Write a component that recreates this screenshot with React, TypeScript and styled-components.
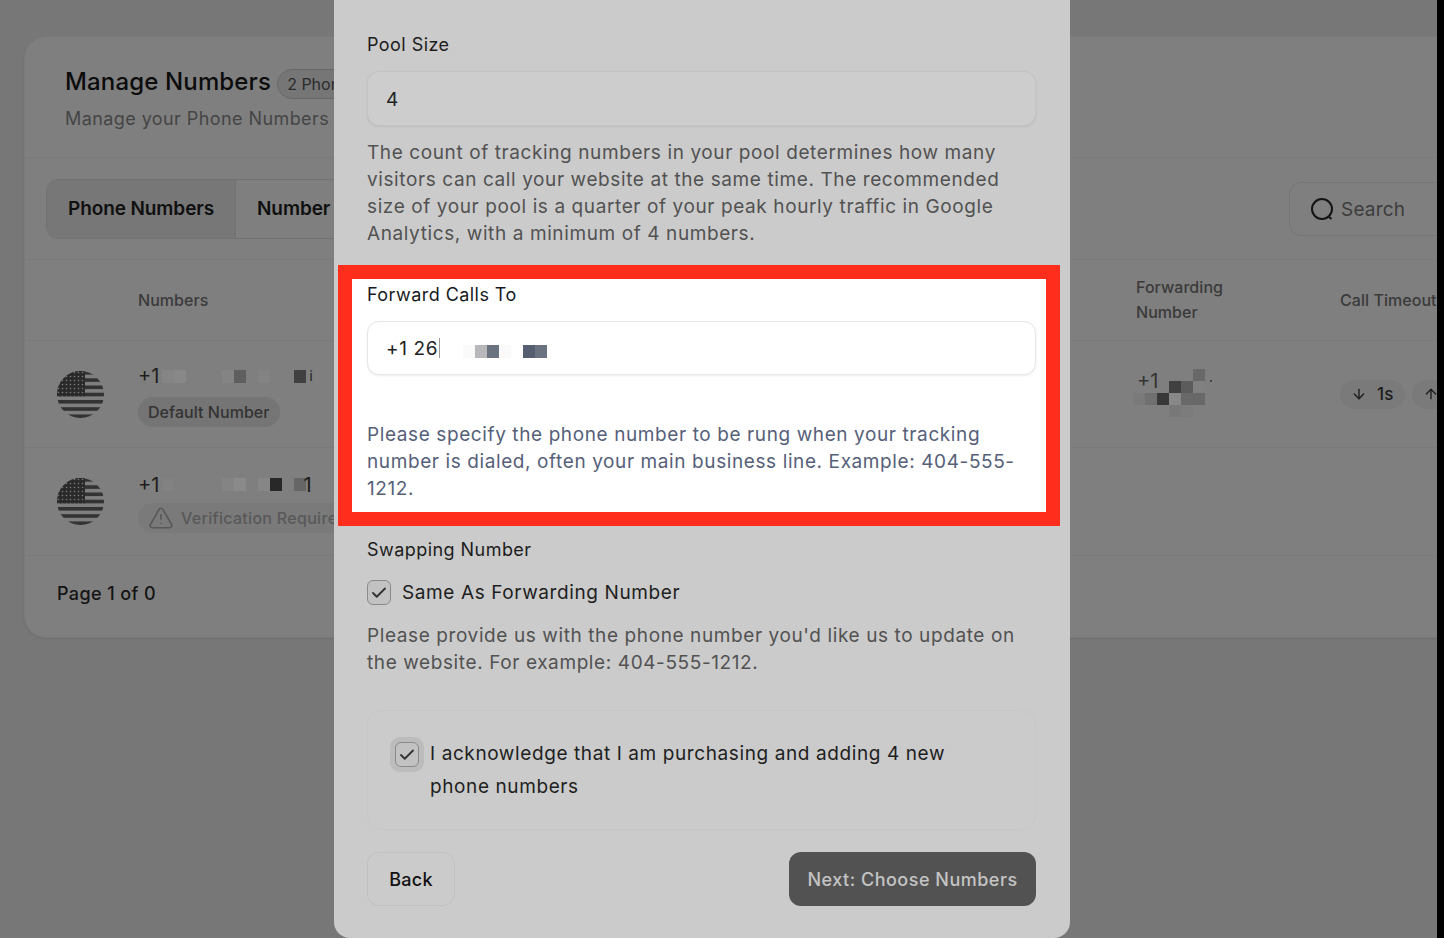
import React from "react";
import styled, { createGlobalStyle } from "styled-components";
import { ArrowDown, ArrowUp, Check, TriangleAlert } from "lucide-react";

const GlobalStyle = createGlobalStyle`
  html, body {
    margin: 0;
    padding: 0;
    background: #777777;
    font-family: Inter, "Liberation Sans", sans-serif;
  }
  * { box-sizing: border-box; }
`;

const Screen = styled.div`
  position: relative;
  display: flex;
  width: 1444px;
  height: 938px;
  overflow: hidden;
  background: #777777;
`;

const Page = styled.div`
  flex: 0 0 1437px;
  padding: 36px 0 0 24px;
  overflow: hidden;
`;

const RightEdge = styled.div`
  flex: 1;
  background: #000000;
`;

const Card = styled.section`
  width: 1560px;
  height: 602px;
  background: #7f7f7f;
  border: 1px solid #7a7a7a;
  border-radius: 22px;
  box-shadow: 0 1px 2px rgba(0, 0, 0, 0.08);
`;

const CardHeader = styled.header`
  height: 121px;
  padding: 30px 0 0 40px;
  border-bottom: 1px solid #7a7a7a;
`;

const TitleRow = styled.div`
  display: flex;
  align-items: center;
  gap: 6px;
  height: 30px;
`;

const Title = styled.h1`
  margin: 0;
  font-size: 24px;
  font-weight: 500;
  line-height: 30px;
  letter-spacing: 0.15px;
  color: #0c0c0c;
`;

const CountBadge = styled.span`
  padding: 0 9px;
  height: 30px;
  margin-top: 3px;
  border: 1px solid #6a6a6a;
  border-radius: 15px;
  background: #767676;
  font-size: 16px;
  line-height: 28px;
  color: #2c2c2c;
  white-space: nowrap;
`;

const Subtitle = styled.p`
  margin: 8px 0 0;
  font-size: 18px;
  line-height: 27px;
  letter-spacing: 0.42px;
  color: #454545;
`;

const TabBar = styled.div`
  display: flex;
  align-items: center;
  justify-content: space-between;
  height: 102px;
  padding: 0 21px;
  border-bottom: 1px solid #7a7a7a;
`;

const Tabs = styled.div`
  display: flex;
  height: 60px;
  border: 1px solid #727272;
  border-radius: 12px;
  overflow: hidden;
`;

const Tab = styled.div<{ $active?: boolean }>`
  display: flex;
  align-items: center;
  padding: 0 21px;
  background: ${(p) => (p.$active ? "#777777" : "transparent")};
  border-right: 1px solid #727272;
  font-size: 19px;
  font-weight: 600;
  letter-spacing: -0.1px;
  color: #101010;
  white-space: nowrap;
`;

const SearchBox = styled.div`
  display: flex;
  align-items: center;
  gap: 7px;
  width: 273px;
  height: 54px;
  padding-left: 20px;
  border: 1px solid #757575;
  border-radius: 12px;
  font-size: 19px;
  line-height: 26px;
  letter-spacing: 0.2px;
  color: #3c3c3c;
`;

const SearchText = styled.span`
  padding-top: 2px;
`;

const TableGrid = styled.div<{ $height: number }>`
  display: grid;
  grid-template-columns: 113px 998px 204px 1fr;
  align-items: center;
  height: ${(p) => p.$height}px;
  border-bottom: 1px solid #7a7a7a;
`;

const HeadCell = styled.div`
  font-size: 16px;
  line-height: 25px;
  font-weight: 500;
  letter-spacing: 0.05px;
  color: #3a3a3a;
`;

const FlagWrap = styled.div`
  display: flex;
  padding-left: 32px;
`;

const NumberCell = styled.div<{ $gap: number; $top: number }>`
  display: flex;
  flex-direction: column;
  align-items: flex-start;
  gap: ${(p) => p.$gap}px;
  padding-top: ${(p) => p.$top}px;
`;

const NumberLine = styled.div`
  display: flex;
  align-items: center;
  height: 20px;
  font-size: 20px;
  color: #1e1e1e;
`;

const Cells = styled.div`
  display: flex;
  margin-left: 3px;
`;

const FieldCells = styled.div`
  display: flex;
  margin: 6px 0 0 23px;
`;

const Pixel = styled.span<{ $c: string }>`
  display: block;
  width: 12px;
  height: 13px;
  background: ${(p) => p.$c};
`;

const LineTail = styled.span<{ $small?: boolean }>`
  margin-left: ${(p) => (p.$small ? 3 : -3)}px;
  font-size: ${(p) => (p.$small ? 13 : 20)}px;
  color: #1a1a1a;
`;

const StatusPill = styled.div<{ $muted?: boolean }>`
  display: flex;
  align-items: center;
  gap: ${(p) => (p.$muted ? 7 : 6)}px;
  height: 30px;
  padding: 0 10px;
  border-radius: 15px;
  background: ${(p) => (p.$muted ? "#7a7a7a" : "#757575")};
  font-size: 16px;
  font-weight: 500;
  letter-spacing: ${(p) => (p.$muted ? 0.3 : 0.05)}px;
  color: ${(p) => (p.$muted ? "#585858" : "#333333")};
  white-space: nowrap;
`;

const ForwardGrid = styled.div`
  display: grid;
  grid-template-columns: repeat(7, 12px);
  grid-template-rows: repeat(4, 12px);
  margin: -3px 0 0 -3px;
`;

const ForwardPrefix = styled.span`
  grid-column: 1 / 4;
  grid-row: 1 / 3;
  align-self: center;
  padding-left: 4px;
  font-size: 20px;
  line-height: 20px;
  color: #333333;
`;

const ForwardDot = styled.span`
  grid-column: 7;
  grid-row: 1 / 3;
  align-self: center;
  width: 2px;
  height: 2px;
  margin-left: 5px;
  background: #444444;
`;

const ForwardCell = styled.span<{ $col: number; $row: number; $c: string }>`
  grid-column: ${(p) => p.$col};
  grid-row: ${(p) => p.$row};
  background: ${(p) => p.$c};
`;

const TimeoutCell = styled.div`
  display: flex;
  gap: 7px;
`;

const TimeoutPill = styled.div`
  display: flex;
  align-items: center;
  gap: 10px;
  height: 29px;
  padding: 0 11px;
  border-radius: 15px;
  background: #7a7a7a;
  font-size: 17px;
  font-weight: 500;
  letter-spacing: 0.3px;
  color: #1c1c1c;
`;

const CardFooter = styled.div`
  padding: 24px 0 0 32px;
  font-size: 18px;
  line-height: 27px;
  font-weight: 500;
  letter-spacing: 0.4px;
  color: #141414;
`;

const Modal = styled.div`
  position: absolute;
  top: 0;
  left: 334px;
  width: 736px;
  height: 938px;
  padding: 31px 34px 0 33px;
  background: #cbcbcb;
  border-radius: 0 0 16px 16px;
  overflow: hidden;
`;

const Label = styled.div<{ $tight?: boolean }>`
  font-size: 18px;
  line-height: 27px;
  letter-spacing: 0.45px;
  color: ${(p) => (p.$tight ? "#171a22" : "#1c1c1c")};
`;

const Field = styled.div<{ $light?: boolean }>`
  display: flex;
  align-items: center;
  height: ${(p) => (p.$light ? 54 : 55)}px;
  margin-top: 13px;
  padding: ${(p) => (p.$light ? 0 : 2)}px 0 0 18px;
  background: ${(p) => (p.$light ? "#ffffff" : "#cdcdcd")};
  border: 1px solid ${(p) => (p.$light ? "#e6e7ea" : "#c3c3c3")};
  border-radius: 12px;
  box-shadow: 0 1px 2px rgba(16, 24, 40, 0.08);
  font-size: 19px;
  letter-spacing: 0.6px;
  line-height: 27px;
  color: #222222;
`;

const Help = styled.p<{ $top?: number; $blue?: boolean }>`
  margin: ${(p) => p.$top ?? 13}px 0 0;
  font-size: 19px;
  line-height: 27px;
  letter-spacing: 0.6px;
  color: ${(p) => (p.$blue ? "#566079" : "#525252")};
`;

const Highlight = styled.div`
  margin: 18px -24px 0 -29px;
  padding: 2px 10px 10px 15px;
  background: #ffffff;
  border: 14px solid #ff2d1c;
`;

const Caret = styled.span`
  width: 1px;
  height: 20px;
  margin-left: 1px;
  background: #999999;
`;

const SwapLabel = styled(Label)`
  margin-top: 10px;
`;

const CheckRow = styled.div`
  display: flex;
  align-items: center;
  gap: 11px;
  height: 25px;
  margin-top: 17px;
  font-size: 19px;
  letter-spacing: 0.6px;
  color: #1e1e1e;
`;

const CheckBox = styled.span`
  display: flex;
  align-items: center;
  justify-content: center;
  flex: none;
  width: 24px;
  height: 25px;
  background: #c2c2c2;
  border: 1px solid #8a8a8a;
  border-radius: 6px;
  color: #333333;
`;

const Halo = styled.span`
  display: flex;
  align-items: center;
  justify-content: center;
  flex: none;
  width: 34px;
  height: 35px;
  background: #bcbcbc;
  border-radius: 10px;
`;

const AckBox = styled.div`
  display: flex;
  align-items: flex-start;
  gap: 6px;
  height: 120px;
  margin-top: 34px;
  padding: 26px 70px 0 22px;
  border: 1px solid #c7c7c7;
  border-radius: 14px;
  font-size: 19px;
  line-height: 33px;
  letter-spacing: 0.6px;
  color: #1e1e1e;
`;

const Actions = styled.div`
  display: flex;
  justify-content: space-between;
  margin-top: 22px;
`;

const BackButton = styled.button`
  width: 88px;
  height: 54px;
  background: transparent;
  border: 1px solid #c1c1c1;
  border-radius: 12px;
  font: 500 18px Inter, sans-serif;
  letter-spacing: 0.3px;
  color: #111111;
`;

const NextButton = styled.button`
  width: 247px;
  height: 54px;
  background: #525252;
  border: 0;
  border-radius: 12px;
  font: 500 18px Inter, sans-serif;
  letter-spacing: 0.5px;
  color: #c4c4c4;
`;

const Flag = ({ id }: { id: string }) => (
  <svg width="47" height="47" viewBox="0 0 47 47">
    <defs>
      <clipPath id={id}>
        <circle cx="23.5" cy="23.5" r="23.5" />
      </clipPath>
      <pattern id={`${id}-stars`} width="4" height="4" patternUnits="userSpaceOnUse">
        <rect width="4" height="4" fill="#2a2a2a" />
        <circle cx="1.5" cy="1.5" r="0.8" fill="#7a7a7a" />
      </pattern>
    </defs>
    <g clipPath={`url(#${id})`}>
      {[0, 2, 4, 6, 8, 10, 12].map((i) => (
        <rect key={i} x="0" y={i * 3.62} width="47" height="3.62" fill="#333333" />
      ))}
      <rect x="0" y="0" width="28" height="25.3" fill={`url(#${id}-stars)`} />
    </g>
  </svg>
);

const SearchIcon = () => (
  <svg width="24" height="24" viewBox="0 0 24 24" fill="none" stroke="#141414" strokeWidth="2">
    <circle cx="12" cy="12" r="10" />
    <path d="M18.5 19.5l3 2.5" />
  </svg>
);

const row1 = ["#858585", "#888888", "#7f7f7f", "#7f7f7f", "#7f7f7f", "#848484", "#5f5f5f", "#7f7f7f", "#838383", "#7f7f7f", "#7f7f7f", "#404040"];
const row2 = ["#828282", "#7f7f7f", "#7f7f7f", "#7f7f7f", "#7f7f7f", "#848484", "#8a8a8a", "#7f7f7f", "#868686", "#282828", "#7f7f7f", "#666666"];
const fieldCells = ["#fafafa", "#b8b8bc", "#6b7280", "#fafafa", "#ffffff", "#565e72", "#6b7280"];
const forwardCells = [
  { col: 6, row: 1, c: "#686868" },
  { col: 4, row: 2, c: "#404040" },
  { col: 5, row: 2, c: "#5c5c5c" },
  { col: 6, row: 2, c: "#808080" },
  { col: 1, row: 3, c: "#7a7a7a" },
  { col: 2, row: 3, c: "#707070" },
  { col: 3, row: 3, c: "#383838" },
  { col: 4, row: 3, c: "#888888" },
  { col: 5, row: 3, c: "#686868" },
  { col: 6, row: 3, c: "#686868" },
  { col: 4, row: 4, c: "#787878" },
  { col: 5, row: 4, c: "#7c7c7c" },
];

export default function App() {
  return (
    <>
      <GlobalStyle />
      <Screen>
        <Page>
          <Card>
            <CardHeader>
              <TitleRow>
                <Title>Manage Numbers</Title>
                <CountBadge>2 Phone Numbers</CountBadge>
              </TitleRow>
              <Subtitle>Manage your Phone Numbers</Subtitle>
            </CardHeader>
            <TabBar>
              <Tabs>
                <Tab $active>Phone Numbers</Tab>
                <Tab>Number Pools</Tab>
              </Tabs>
              <SearchBox>
                <SearchIcon />
                <SearchText>Search</SearchText>
              </SearchBox>
            </TabBar>
            <TableGrid $height={81}>
              <span />
              <HeadCell>Numbers</HeadCell>
              <HeadCell>
                Forwarding
                <br />
                Number
              </HeadCell>
              <HeadCell>Call Timeout</HeadCell>
            </TableGrid>
            <TableGrid $height={107}>
              <FlagWrap>
                <Flag id="flag-a" />
              </FlagWrap>
              <NumberCell $gap={11} $top={5}>
                <NumberLine>
                  +1
                  <Cells>
                    {row1.map((c, i) => (
                      <Pixel key={i} $c={c} />
                    ))}
                  </Cells>
                  <LineTail $small>i</LineTail>
                </NumberLine>
                <StatusPill>Default Number</StatusPill>
              </NumberCell>
              <ForwardGrid>
                {forwardCells.map((f, i) => (
                  <ForwardCell key={i} $col={f.col} $row={f.row} $c={f.c} />
                ))}
                <ForwardPrefix>+1</ForwardPrefix>
                <ForwardDot />
              </ForwardGrid>
              <TimeoutCell>
                <TimeoutPill>
                  <ArrowDown size={16} />
                  1s
                </TimeoutPill>
                <TimeoutPill>
                  <ArrowUp size={16} />
                </TimeoutPill>
              </TimeoutCell>
            </TableGrid>
            <TableGrid $height={108}>
              <FlagWrap>
                <Flag id="flag-b" />
              </FlagWrap>
              <NumberCell $gap={8} $top={4}>
                <NumberLine>
                  +1
                  <Cells>
                    {row2.map((c, i) => (
                      <Pixel key={i} $c={c} />
                    ))}
                  </Cells>
                  <LineTail>1</LineTail>
                </NumberLine>
                <StatusPill $muted>
                  <TriangleAlert size={26} strokeWidth={1.5} />
                  Verification Required
                </StatusPill>
              </NumberCell>
            </TableGrid>
            <CardFooter>Page 1 of 0</CardFooter>
          </Card>
        </Page>
        <RightEdge />
        <Modal>
          <Label>Pool Size</Label>
          <Field>4</Field>
          <Help>
            The count of tracking numbers in your pool determines how many visitors can call your website at the same
            time. The recommended size of your pool is a quarter of your peak hourly traffic in Google Analytics, with a
            minimum of 4 numbers.
          </Help>
          <Highlight>
            <Label $tight>Forward Calls To</Label>
            <Field $light>
              +1 26
              <Caret />
              <FieldCells>
                {fieldCells.map((c, i) => (
                  <Pixel key={i} $c={c} />
                ))}
              </FieldCells>
            </Field>
            <Help $top={46} $blue>
              Please specify the phone number to be rung when your tracking number is dialed, often your main business
              line. Example: 404-555-1212.
            </Help>
          </Highlight>
          <SwapLabel>Swapping Number</SwapLabel>
          <CheckRow>
            <CheckBox>
              <Check size={18} strokeWidth={2.5} />
            </CheckBox>
            Same As Forwarding Number
          </CheckRow>
          <Help $top={17}>
            Please provide us with the phone number you'd like us to update on the website. For example: 404-555-1212.
          </Help>
          <AckBox>
            <Halo>
              <CheckBox>
                <Check size={18} strokeWidth={2.5} />
              </CheckBox>
            </Halo>
            <span>I acknowledge that I am purchasing and adding 4 new phone numbers</span>
          </AckBox>
          <Actions>
            <BackButton>Back</BackButton>
            <NextButton>Next: Choose Numbers</NextButton>
          </Actions>
        </Modal>
      </Screen>
    </>
  );
}
